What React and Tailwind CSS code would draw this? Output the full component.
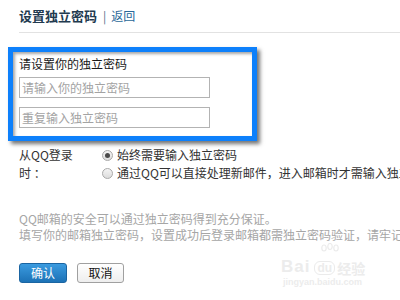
import React from 'react';

const cjk = { fontFamily: '"Noto Sans CJK SC", "Liberation Sans", sans-serif' };

const Radio = ({ checked }) => (
  <span className="w-[11px] h-[11px] rounded-full border border-[#a9a9a9] bg-gradient-to-b from-[#f4f4f4] to-[#dcdcdc] flex items-center justify-center shrink-0">
    {checked && <span className="w-[5px] h-[5px] rounded-full bg-[#4a4a4a]" />}
  </span>
);

const Watermark = () => (
  <div className="absolute left-[281px] top-[243px] w-[92px] h-[46px] text-[#ececec] pointer-events-none" style={{ fontFamily: '"Liberation Sans", sans-serif' }}>
    <svg className="absolute left-[38px] top-0" width="22" height="20" viewBox="0 0 22 20" fill="none" stroke="#ebebeb" strokeWidth="1.2">
      <ellipse cx="5" cy="5" rx="2.2" ry="3" />
      <ellipse cx="11" cy="3.5" rx="2.2" ry="3" />
      <ellipse cx="17" cy="5" rx="2.2" ry="3" />
    </svg>
    <div className="absolute left-0 top-[15px] flex items-end leading-none">
      <span className="text-[17px] font-bold tracking-[1px]">Bai</span>
      <span className="ml-[4px] px-[2px] rounded-[6px] border border-[#ebebeb] text-[12px] font-bold">du</span>
      <span className="ml-[2px] text-[14px] font-bold" style={cjk}>经验</span>
    </div>
    <div className="absolute left-[2px] top-[35px] text-[9px] font-bold leading-none">jingyan.baidu.com</div>
  </div>
);

export default function App() {
  return (
    <div className="relative w-[400px] h-[300px] overflow-hidden bg-white text-[12px] text-[#222]" style={cjk}>
      <div className="ml-[19px] h-[33px] border-b border-[#e2e2e2] flex items-center pb-[1px]">
        <span className="text-[13px] font-bold text-[#223a4f] leading-none">设置独立密码</span>
        <span className="ml-[6px] text-[#50708a] leading-none">|</span>
        <span className="ml-[5px] text-[#2a6899] leading-none">返回</span>
      </div>

      <div className="mt-[14px] ml-[8px] w-[249px] h-[94px] border-[5px] border-[#0d80fb] pl-[6px] pt-[4px] shadow-[3px_3px_4px_rgba(0,0,0,0.55),inset_2px_2px_3px_rgba(0,0,0,0.35)]">
        <div className="leading-[16px] text-[#1a1a1a]">请设置你的独立密码</div>
        <div className="mt-[5px] flex flex-col gap-[9px]">
          <input placeholder="请输入你的独立密码" className="w-[191px] h-[21px] border border-[#b3b3b3] px-[2px] text-[12px] outline-none placeholder:text-[#a3a3a3]" style={cjk} />
          <input placeholder="重复输入独立密码" className="w-[191px] h-[21px] border border-[#b3b3b3] px-[2px] text-[12px] outline-none placeholder:text-[#a3a3a3]" style={cjk} />
        </div>
      </div>

      <div className="mt-[5px] ml-[19px] flex leading-[18px] text-[#333]">
        <div className="w-[83px] shrink-0">从QQ登录<br />时 ：</div>
        <div className="flex flex-col whitespace-nowrap">
          <div className="flex items-center gap-[4px]"><Radio checked />始终需要输入独立密码</div>
          <div className="flex items-center gap-[4px]"><Radio />通过QQ可以直接处理新邮件，进入邮箱时才需输入独立密码</div>
        </div>
      </div>

      <div className="mt-[29px] ml-[19px] leading-[16px] text-[#a6a6a6] whitespace-nowrap">
        <div>QQ邮箱的安全可以通过独立密码得到充分保证。</div>
        <div>填写你的邮箱独立密码，设置成功后登录邮箱都需独立密码验证，请牢记。</div>
      </div>

      <div className="mt-[20px] ml-[19px] flex gap-[10px]">
        <button className="w-[48px] h-[20px] rounded-[3px] border border-[#1b65a2] bg-gradient-to-b from-[#3b9be0] to-[#1c72b6] text-white text-[12px] leading-none">确认</button>
        <button className="w-[47px] h-[20px] rounded-[3px] border border-[#a0a0a0] bg-gradient-to-b from-white to-[#eeeeee] text-[#111] text-[12px] leading-none">取消</button>
      </div>

      <Watermark />
    </div>
  );
}
